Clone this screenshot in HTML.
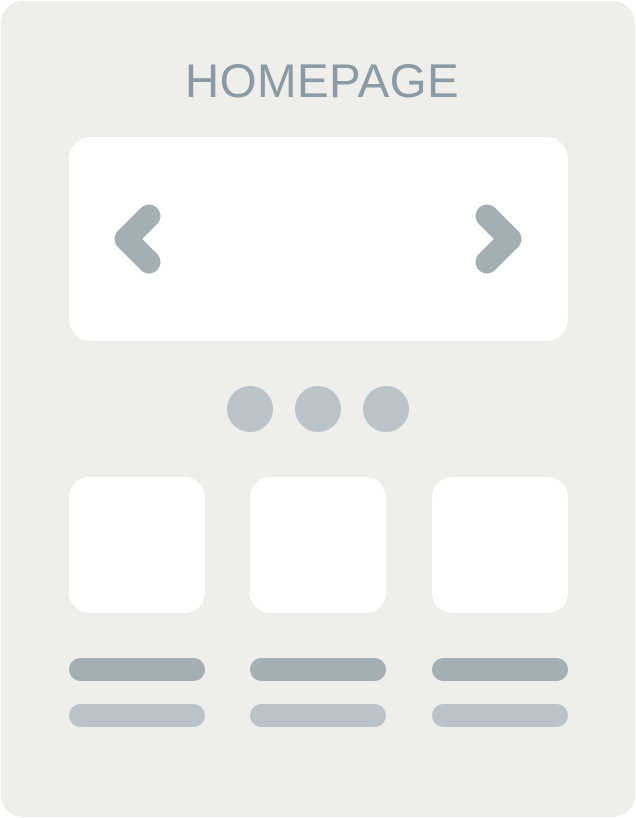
<!DOCTYPE html>
<html><head><style>
body{margin:0;width:636px;height:818px;background:#fff;position:relative;overflow:hidden;font-family:"Liberation Sans",sans-serif}
.a{position:absolute}
.p{left:1px;top:1px;width:634px;height:816px;background:#efeeeb;border-radius:22px}
.w{background:#fff}
.d{background:#b9c3c9;border-radius:50%;width:46px;height:46px;top:386px}
.t{top:477px;width:136px;height:136px;border-radius:20px;background:#fff}
.b1{top:658px;width:136px;height:23px;border-radius:12px;background:#a3aeb5}
.b2{top:704px;width:136px;height:23px;border-radius:12px;background:#b9c3c9}
</style></head><body>
<div class="a p"></div>
<div class="a" style="left:4px;width:636px;top:54px;text-align:center;font-size:47.5px;line-height:56px;color:#8a9ba5;letter-spacing:0.4px">HOMEPAGE</div>
<div class="a w" style="left:69px;top:137px;width:499px;height:204px;border-radius:22px"></div>
<svg class="a" style="left:0;top:0" width="636" height="818"><g fill="none" stroke="#a3aeb5" stroke-width="23" stroke-linecap="round" stroke-linejoin="round"><path d="M149 216 L126 239 L149 262"/><path d="M487 216 L510 239 L487 262"/></g></svg>
<div class="a d" style="left:227px"></div><div class="a d" style="left:295px"></div><div class="a d" style="left:363px"></div>
<div class="a t" style="left:69px"></div><div class="a t" style="left:250px"></div><div class="a t" style="left:432px"></div>
<div class="a b1" style="left:69px"></div><div class="a b1" style="left:250px"></div><div class="a b1" style="left:432px"></div>
<div class="a b2" style="left:69px"></div><div class="a b2" style="left:250px"></div><div class="a b2" style="left:432px"></div>
</body></html>
